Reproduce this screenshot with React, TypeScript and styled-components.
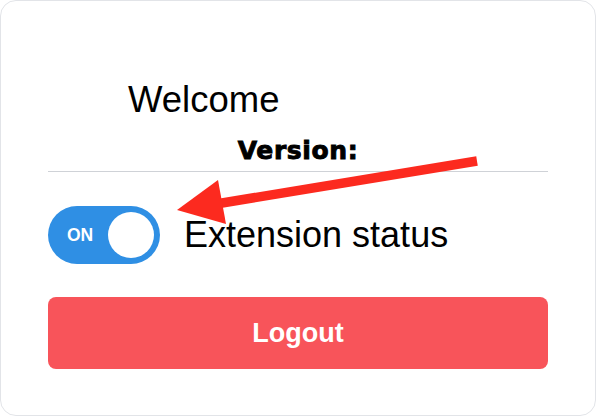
import React from "react";
import styled, { createGlobalStyle } from "styled-components";

const Global = createGlobalStyle`
  html, body { margin: 0; padding: 0; background: #ffffff; }
  body { font-family: "Liberation Sans", Arial, sans-serif; }
  * { box-sizing: border-box; }
`;

const Card = styled.div`
  position: relative;
  width: 596px;
  height: 416px;
  border: 1px solid #e2e4e8;
  border-radius: 16px;
  background: #ffffff;
  padding: 79px 47px 0;
  display: flex;
  flex-direction: column;
`;

const Welcome = styled.h1`
  margin: 0;
  padding-left: 80px;
  font-size: 36.5px;
  line-height: 40px;
  font-weight: 400;
  color: #000;
`;

const Version = styled.div`
  margin-top: 16px;
  text-align: center;
  font-family: "DejaVu Sans", sans-serif;
  font-weight: 700;
  font-size: 25px;
  line-height: 30px;
  color: #000;
  -webkit-text-stroke: 0.9px #000;
  letter-spacing: 0.6px;
`;

const Divider = styled.hr`
  margin: 5px 0 0;
  border: none;
  height: 1px;
  background: #cfd2d7;
`;

const StatusRow = styled.div`
  margin-top: 34px;
  display: flex;
  align-items: center;
  gap: 24px;
`;

const Toggle = styled.div<{ $on: boolean }>`
  width: 112px;
  height: 58px;
  border-radius: 29px;
  background: ${(p) => (p.$on ? "#2f8fe4" : "#c4c7cc")};
  display: flex;
  align-items: center;
  justify-content: space-between;
  padding: 0 6px 0 19px;
  flex-shrink: 0;
`;

const ToggleLabel = styled.span`
  color: #fff;
  font-weight: 700;
  font-size: 17.5px;
`;

const Knob = styled.span`
  width: 46px;
  height: 46px;
  border-radius: 50%;
  background: #fff;
`;

const StatusText = styled.span`
  font-size: 36px;
  line-height: 40px;
  color: #000;
`;

const LogoutButton = styled.button`
  margin-top: 33px;
  height: 72px;
  width: 100%;
  border: none;
  border-radius: 8px;
  background: #f8545a;
  color: #fff;
  font-family: "Liberation Sans", Arial, sans-serif;
  font-weight: 700;
  font-size: 27px;
  cursor: pointer;
`;

const ArrowOverlay = styled.svg`
  position: absolute;
  left: 0;
  top: 0;
  width: 596px;
  height: 416px;
  pointer-events: none;
`;

export default function App() {
  return (
    <>
      <Global />
      <Card>
        <Welcome>Welcome</Welcome>
        <Version>Version:</Version>
        <Divider />
        <StatusRow>
          <Toggle $on>
            <ToggleLabel>ON</ToggleLabel>
            <Knob />
          </Toggle>
          <StatusText>Extension status</StatusText>
        </StatusRow>
        <LogoutButton>Logout</LogoutButton>
        <ArrowOverlay viewBox="0 0 596 416">
          <line x1="476" y1="160" x2="215" y2="203" stroke="#fc2a1f" strokeWidth="9.5" />
          <polygon points="176,209 217,179 225,223" fill="#fc2a1f" />
        </ArrowOverlay>
      </Card>
    </>
  );
}
